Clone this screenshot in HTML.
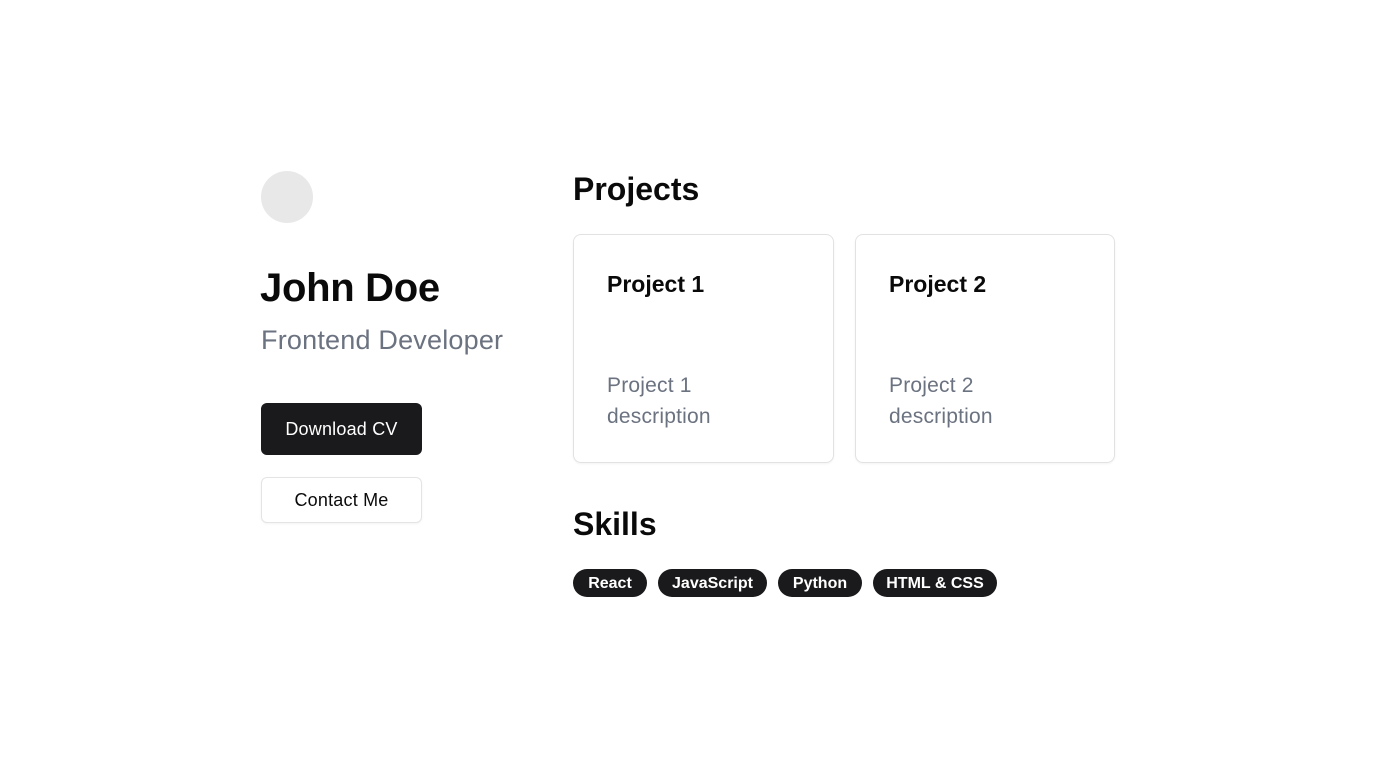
<!DOCTYPE html>
<html><head><meta charset="utf-8"><style>
*{margin:0;padding:0;box-sizing:border-box}
body{width:1376px;height:768px;background:#fff;font-family:"Liberation Sans",sans-serif;position:relative;overflow:hidden;color:#0a0a0a}
.a{position:absolute;white-space:nowrap}
.avatar{left:261px;top:171px;width:52px;height:52px;border-radius:50%;background:#e8e8e8}
.btn{left:261px;width:161px;display:flex;align-items:center;justify-content:center;font-size:18px;border-radius:6px;letter-spacing:0.2px}
.card{position:absolute;top:234px;height:229px;border:1px solid #e2e2e2;border-radius:8px;box-shadow:0 1px 2px rgba(0,0,0,.05)}
.card h3{position:absolute;left:33px;top:36px;font-size:23px;font-weight:bold;letter-spacing:0px}
.card p{position:absolute;left:33px;top:135px;font-size:21px;line-height:31px;color:#6b7280;white-space:normal;letter-spacing:0.2px}
.tag{position:absolute;top:569px;height:28px;padding-top:2px;border-radius:14px;background:#1a1a1c;color:#fff;font-size:16px;font-weight:bold;display:flex;align-items:center;justify-content:center}
</style></head><body>
<div class="a avatar"></div>
<div class="a" style="left:260px;top:266px;font-size:40px;font-weight:bold;letter-spacing:-0.3px">John Doe</div>
<div class="a" style="left:261px;top:325px;font-size:27px;color:#6b7280;letter-spacing:0.2px">Frontend Developer</div>
<div class="a btn" style="top:403px;height:52px;background:#1a1a1c;color:#fff">Download CV</div>
<div class="a btn" style="top:477px;height:46px;border:1px solid #e4e4e4;box-shadow:0 1px 2px rgba(0,0,0,.05);color:#0a0a0a">Contact Me</div>
<div class="a" style="left:573px;top:171px;font-size:32px;font-weight:bold;letter-spacing:0px">Projects</div>
<div class="card" style="left:573px;width:261px"><h3>Project 1</h3><p>Project 1<br>description</p></div>
<div class="card" style="left:855px;width:260px"><h3>Project 2</h3><p>Project 2<br>description</p></div>
<div class="a" style="left:573px;top:506px;font-size:32px;font-weight:bold;letter-spacing:0px">Skills</div>
<div class="tag" style="left:573px;width:74px">React</div>
<div class="tag" style="left:658px;width:109px">JavaScript</div>
<div class="tag" style="left:778px;width:84px">Python</div>
<div class="tag" style="left:873px;width:124px">HTML &amp; CSS</div>
</body></html>
